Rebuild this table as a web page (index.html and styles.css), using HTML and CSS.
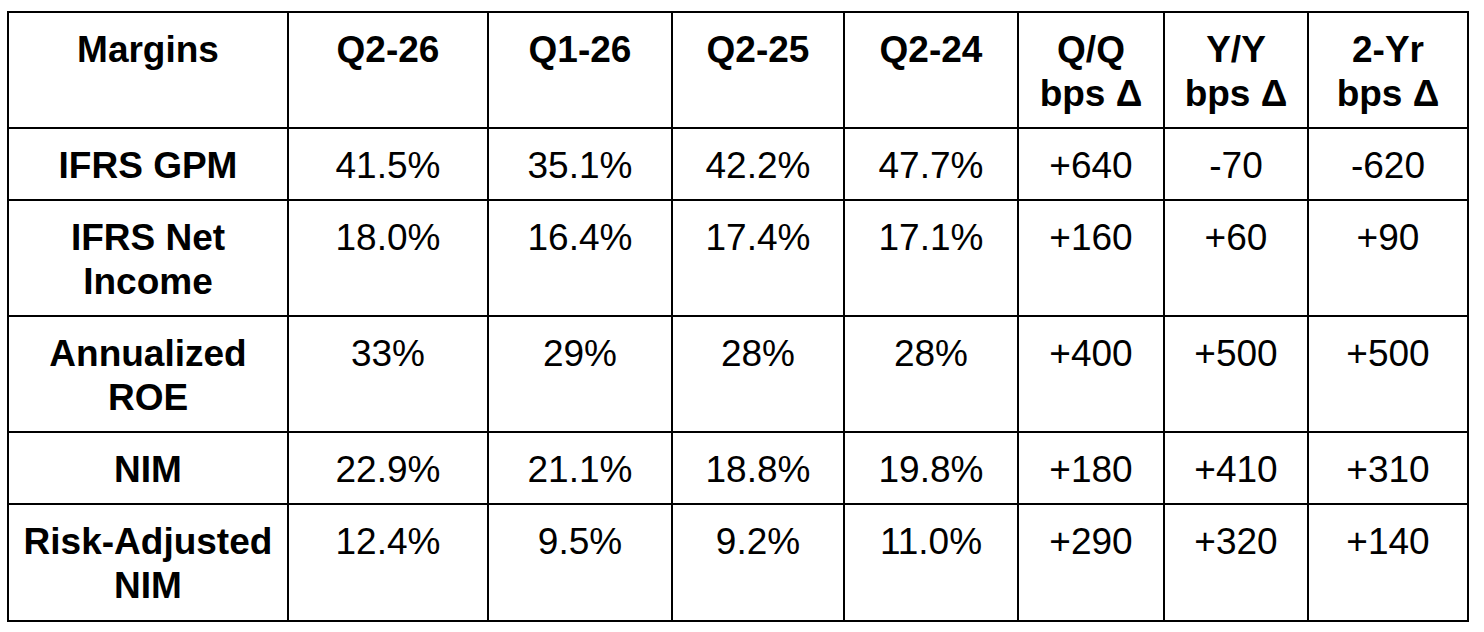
FILE: index.html
```html
<!DOCTYPE html>
<html lang="en">
<head>
<meta charset="utf-8">
<title>Margins</title>
<link rel="stylesheet" href="styles.css">
</head>
<body>
<table class="margins">
  <colgroup>
    <col class="c-label">
    <col class="c-q226">
    <col class="c-q126">
    <col class="c-q225">
    <col class="c-q224">
    <col class="c-qq">
    <col class="c-yy">
    <col class="c-2y">
  </colgroup>
  <thead>
    <tr>
      <th>Margins</th>
      <th>Q2-26</th>
      <th>Q1-26</th>
      <th>Q2-25</th>
      <th>Q2-24</th>
      <th>Q/Q<br>bps Δ</th>
      <th>Y/Y<br>bps Δ</th>
      <th>2-Yr<br>bps Δ</th>
    </tr>
  </thead>
  <tbody>
    <tr>
      <th>IFRS GPM</th>
      <td>41.5%</td><td>35.1%</td><td>42.2%</td><td>47.7%</td>
      <td>+640</td><td>-70</td><td>-620</td>
    </tr>
    <tr>
      <th>IFRS Net<br>Income</th>
      <td>18.0%</td><td>16.4%</td><td>17.4%</td><td>17.1%</td>
      <td>+160</td><td>+60</td><td>+90</td>
    </tr>
    <tr>
      <th>Annualized<br>ROE</th>
      <td>33%</td><td>29%</td><td>28%</td><td>28%</td>
      <td>+400</td><td>+500</td><td>+500</td>
    </tr>
    <tr>
      <th>NIM</th>
      <td>22.9%</td><td>21.1%</td><td>18.8%</td><td>19.8%</td>
      <td>+180</td><td>+410</td><td>+310</td>
    </tr>
    <tr class="last">
      <th>Risk-Adjusted<br>NIM</th>
      <td>12.4%</td><td>9.5%</td><td>9.2%</td><td>11.0%</td>
      <td>+290</td><td>+320</td><td>+140</td>
    </tr>
  </tbody>
</table>
</body>
</html>
```

FILE: styles.css
```css
html, body {
  margin: 0;
  padding: 0;
  background: #ffffff;
}

body {
  padding: 11px 0 0 7px;
  font-family: "Liberation Sans", Arial, sans-serif;
  color: #000000;
}

.margins {
  table-layout: fixed;
  width: 1462px;
  border-collapse: separate;
  border-spacing: 2px;
  background: #000000;
}

.c-label { width: 278px; }
.c-q226 { width: 198px; }
.c-q126 { width: 182px; }
.c-q225 { width: 170px; }
.c-q224 { width: 172px; }
.c-qq { width: 144px; }
.c-yy { width: 142px; }
.c-2y { width: 158px; }

.margins th,
.margins td {
  background: #ffffff;
  text-align: center;
  vertical-align: top;
  padding: 15px 0 11px;
  font-size: 37px;
  line-height: 44px;
  white-space: nowrap;
}

.margins th {
  font-weight: bold;
}

.margins td {
  font-weight: normal;
}

.margins .last th,
.margins .last td {
  padding-bottom: 12px;
}
```
